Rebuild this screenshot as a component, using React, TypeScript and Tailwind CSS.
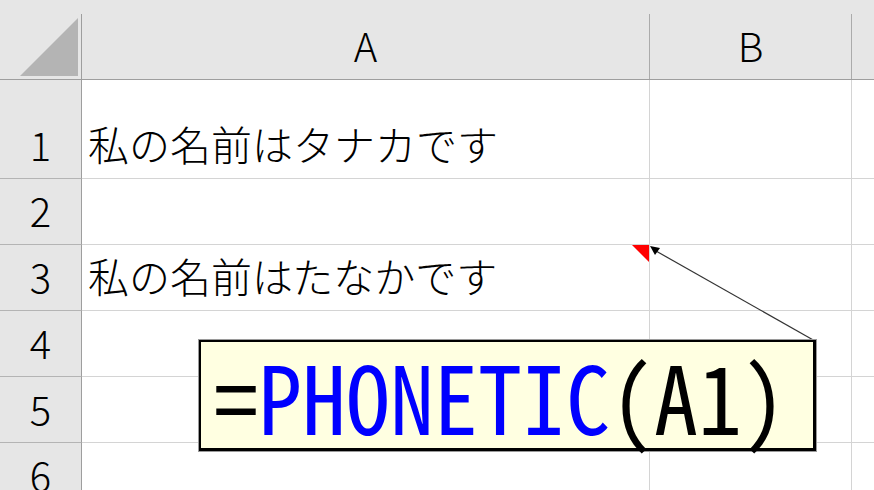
import React from 'react';

const rows = [
  { n: '1', h: 'h-[99px]', a: '私の名前はタナカです' },
  { n: '2', h: 'h-[66px]', a: '' },
  { n: '3', h: 'h-[66px]', a: '私の名前はたなかです', note: true },
  { n: '4', h: 'h-[66px]', a: '' },
  { n: '5', h: 'h-[66px]', a: '' },
  { n: '6', h: 'h-[66px]', a: '' },
];

const App: React.FC = () => {
  return (
    <div className="relative w-[874px] h-[490px] overflow-hidden bg-white text-black font-['Noto_Sans_CJK_JP',sans-serif] font-light">
      {/* column headers */}
      <div className="flex h-[80px] bg-[#e6e6e6] border-b border-[#9e9e9e]">
        <div className="relative w-[82px] flex flex-col">
          <div className="mt-[14px] flex-1 border-r border-[#9e9e9e]" />
          <svg className="absolute left-[20px] top-[18px]" width="58" height="58" viewBox="0 0 58 58">
            <polygon points="58,0 58,58 0,58" fill="#b4b4b4" />
          </svg>
        </div>
        <div className="w-[568px] flex flex-col">
          <div className="mt-[14px] flex-1 flex items-end justify-center pb-[14px] border-r border-[#ababab] text-[40px] leading-none">
            A
          </div>
        </div>
        <div className="w-[202px] flex flex-col">
          <div className="mt-[14px] flex-1 flex items-end justify-center pb-[14px] border-r border-[#ababab] text-[40px] leading-none">
            B
          </div>
        </div>
        <div className="flex-1" />
      </div>

      {/* rows */}
      {rows.map(r => (
        <div key={r.n} className={`flex ${r.h}`}>
          <div className="w-[82px] flex items-end justify-center pb-[14px] bg-[#e6e6e6] border-r border-r-[#9e9e9e] border-b border-b-[#b4b4b4] text-[40px] leading-none">
            {r.n}
          </div>
          <div className="relative w-[568px] flex items-end pl-[6px] pb-[14px] border-r border-b border-[#d4d4d4] text-[41px] leading-none whitespace-nowrap">
            {r.a}
            {r.note && (
              <svg className="absolute right-0 top-0" width="17" height="17" viewBox="0 0 17 17">
                <polygon points="0,0 17,0 17,17" fill="#ff0000" />
              </svg>
            )}
          </div>
          <div className="w-[202px] border-r border-b border-[#d4d4d4]" />
          <div className="flex-1 border-b border-[#d4d4d4]" />
        </div>
      ))}

      {/* comment arrow */}
      <svg className="absolute left-0 top-0 pointer-events-none" width="874" height="490" viewBox="0 0 874 490">
        <line x1="815" y1="341" x2="656" y2="251" stroke="#333" strokeWidth="1.2" />
        <polygon points="650,246 660,248 655,255" fill="#000" />
      </svg>

      {/* comment box */}
      <div className="absolute left-[199px] top-[340px] w-[617px] h-[111px] flex items-center pl-[13px] bg-[#ffffe1] border-t-2 border-l-2 border-r-[3px] border-b-[3px] border-black ring-1 ring-[#9a9a9a] font-['Noto_Sans_CJK_JP',monospace] font-normal text-[88px] leading-none [font-feature-settings:'hwid'] whitespace-nowrap">
        <span className="inline-block scale-y-[1.06]">=</span>
        <span className="inline-block scale-y-[1.06] text-[#0000ff]">PHONETIC</span>
        <span className="inline-block scale-y-[1.06]">(A1)</span>
      </div>
    </div>
  );
};

export default App;
